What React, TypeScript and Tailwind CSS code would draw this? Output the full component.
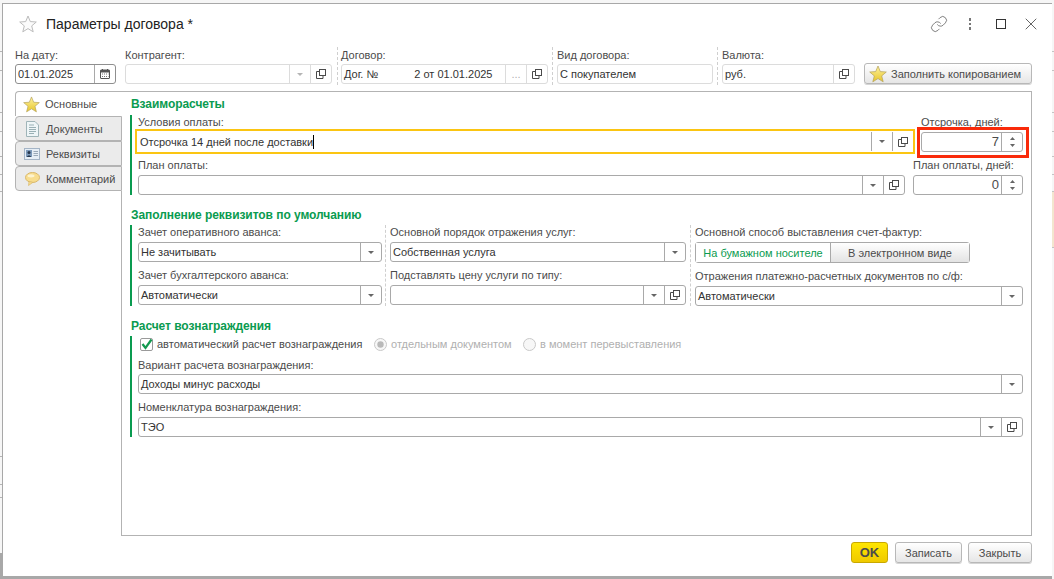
import React from "react";
import { Link, X } from "lucide-react";

const OpenIcon = () => (
  <svg width="10" height="10" viewBox="0 0 10 10" fill="none" stroke="#4a4a4a" strokeWidth="1">
    <rect x="3.5" y="0.5" width="6" height="6" />
    <path d="M3 2.5H0.5V9.5H7V7" />
  </svg>
);

const Caret = ({ light = false }: { light?: boolean }) => (
  <svg width="6" height="3" viewBox="0 0 6 3">
    <path d="M0 0H6L3 3Z" fill={light ? "#b5b5b5" : "#666666"} />
  </svg>
);

const CalendarIcon = () => (
  <svg width="10" height="10" viewBox="0 0 10 10" fill="none">
    <rect x="0.5" y="1" width="9" height="8.5" rx="0.5" stroke="#555555" />
    <rect x="0.5" y="1" width="9" height="2.5" fill="#555555" />
    <path d="M2.5 0V1.5M7.5 0V1.5" stroke="#555555" />
    <path d="M2 5H8.5M2 7.5H8.5" stroke="#777777" strokeDasharray="1 1" />
  </svg>
);

const Star = ({ size = 18 }: { size?: number }) => (
  <svg width={size} height={size} viewBox="0 0 18 18">
    <defs>
      <linearGradient id="starFill" x1="0" y1="0" x2="0" y2="1">
        <stop offset="0" stopColor="#fff3a0" />
        <stop offset="1" stopColor="#e6c52a" />
      </linearGradient>
    </defs>
    <path
      d="M9 1L11.3 6.6L17.3 7L12.7 10.9L14.2 16.8L9 13.6L3.8 16.8L5.3 10.9L0.7 7L6.7 6.6Z"
      fill="url(#starFill)"
      stroke="#b3a15a"
      strokeWidth="0.7"
    />
  </svg>
);

const EmptyStar = () => (
  <svg width="18" height="18" viewBox="0 0 18 18">
    <path
      d="M9 1L11.3 6.6L17.3 7L12.7 10.9L14.2 16.8L9 13.6L3.8 16.8L5.3 10.9L0.7 7L6.7 6.6Z"
      fill="#fbfbfb"
      stroke="#bcbcbc"
      strokeWidth="1"
    />
  </svg>
);

const DocIcon = () => (
  <svg width="13" height="16" viewBox="0 0 13 16" fill="none">
    <path d="M0.5 0.5H9L12.5 4V15.5H0.5Z" fill="#eef5f7" stroke="#9fb4b8" />
    <path d="M3 4H8M3 6.5H10M3 8.5H10M3 10.5H10M3 12.5H8" stroke="#9ab0b5" />
  </svg>
);

const CardIcon = () => (
  <svg width="16" height="12" viewBox="0 0 16 12" fill="none">
    <rect x="0.5" y="0.5" width="15" height="11" fill="#e6eef6" stroke="#a4b4c6" />
    <rect x="2" y="2" width="6" height="7" fill="#7d9abb" />
    <circle cx="5" cy="4.5" r="1.5" fill="#26374d" />
    <path d="M3 9C3 7 7 7 7 9Z" fill="#26374d" />
    <path d="M9.5 3.5H14M9.5 5.5H14M9.5 7.5H14" stroke="#9aa9b8" />
  </svg>
);

const BubbleIcon = () => (
  <svg width="15" height="14" viewBox="0 0 15 14">
    <ellipse cx="7.5" cy="5.5" rx="7" ry="5" fill="#f8dd8e" stroke="#d9b76a" />
    <path d="M4 9.5L3.5 13.5L8 10.3Z" fill="#f8dd8e" stroke="#d9b76a" strokeWidth="0.7" />
    <ellipse cx="6" cy="3.8" rx="3.5" ry="1.6" fill="#fdf3cf" />
  </svg>
);

const CheckIcon = () => (
  <svg width="13" height="13" viewBox="0 0 13 13" fill="none">
    <rect x="0.5" y="0.5" width="12" height="12" rx="1.5" fill="#ffffff" stroke="#9a9a9a" />
    <path d="M2.5 6L5.5 10L11.5 1.5" stroke="#139a50" strokeWidth="2.2" />
  </svg>
);

const RadioIcon = ({ on = false }: { on?: boolean }) => (
  <svg width="13" height="13" viewBox="0 0 13 13" fill="none">
    <circle cx="6.5" cy="6.5" r="6" fill="#f7f7f7" stroke="#c8c8c8" />
    {on && <circle cx="6.5" cy="6.5" r="3.2" fill="#b9b9b9" />}
  </svg>
);

const FieldButton = ({ children, light = false }: { children: React.ReactNode; light?: boolean }) => (
  <div
    className={`flex h-full w-[21px] shrink-0 items-center justify-center border-l ${
      light ? "border-[#dcdcdc]" : "border-[#a9a9a9]"
    }`}
  >
    {children}
  </div>
);

type FieldProps = {
  text?: string;
  value?: React.ReactNode;
  list?: boolean;
  open?: boolean;
  light?: boolean;
  dots?: boolean;
  className?: string;
};

const Field = ({ text, value, list, open, light, dots, className = "" }: FieldProps) => (
  <div
    className={`flex h-[20px] items-center rounded-[3px] border bg-white text-[#333333] ${
      light ? "border-[#dcdcdc]" : "border-[#a9a9a9]"
    } ${className}`}
  >
    <div className="flex-1 truncate pl-[2px]">{value ?? text}</div>
    {list && (
      <FieldButton light={light}>
        <Caret light={light} />
      </FieldButton>
    )}
    {dots && (
      <FieldButton light={light}>
        <span className="text-[#b0b0b0]">...</span>
      </FieldButton>
    )}
    {open && (
      <FieldButton light={light}>
        <OpenIcon />
      </FieldButton>
    )}
  </div>
);

const Spinner = () => (
  <div className="flex h-full w-[21px] shrink-0 flex-col items-center justify-center gap-[4px] border-l border-[#a9a9a9]">
    <svg width="5" height="3" viewBox="0 0 5 3">
      <path d="M0 3H5L2.5 0Z" fill="#666666" />
    </svg>
    <svg width="5" height="3" viewBox="0 0 5 3">
      <path d="M0 0H5L2.5 3Z" fill="#666666" />
    </svg>
  </div>
);

const NumberField = ({ value }: { value: string }) => (
  <div className="flex h-[20px] items-center rounded-[3px] border border-[#a9a9a9] bg-white text-[13px] text-[#4b4b4b]">
    <div className="flex-1 pr-[2px] text-right">{value}</div>
    <Spinner />
  </div>
);

const Label = ({ children, className = "" }: { children: React.ReactNode; className?: string }) => (
  <div className={`flex items-center whitespace-nowrap text-[#4b4b4b] ${className}`}>{children}</div>
);

const Heading = ({ children, first = false }: { children: React.ReactNode; first?: boolean }) => (
  <div
    className={`flex items-center pl-[9px] text-[12px] font-bold tracking-[-0.06px] text-[#0a9b50] ${
      first ? "h-[23px] pt-[1px]" : "h-[30px] pt-[10px]"
    }`}
  >
    {children}
  </div>
);

const Group = ({ children, className = "" }: { children: React.ReactNode; className?: string }) => (
  <div className={`ml-[8px] border-l-2 border-[#0a9b50] pl-[6px] ${className}`}>{children}</div>
);

const Sep = () => <div className="h-full w-0 border-l border-dashed border-[#cfcfcf]" />;

const tabs = [
  { name: "Документы", icon: <DocIcon /> },
  { name: "Реквизиты", icon: <CardIcon /> },
  { name: "Комментарий", icon: <BubbleIcon /> },
];

const Button = ({ children, className = "" }: { children: React.ReactNode; className?: string }) => (
  <div
    className={`flex h-[21px] items-center justify-center rounded-[3px] border border-[#b8b8b8] bg-linear-to-b from-white to-[#e6e6e6] text-[#4b4b4b] shadow-[0_1px_0_#d5d5d5] ${className}`}
  >
    {children}
  </div>
);

const leftLines = [49, 19, 42, 19, 25, 18, 17, 265, 28, 13];
const rightLines = [49, 19, 42, 19, 25, 18, 17, 56];

export default function App() {
  return (
    <div
      className="flex h-[579px] w-[1054px] overflow-hidden bg-[#f6f6f6] text-[11px] leading-[14px]"
      style={{ fontFamily: '"Liberation Sans", Arial, sans-serif' }}
    >
      <div className="flex h-full w-[2px] shrink-0 flex-col pt-[3px]">
        {leftLines.map((h, i) => (
          <div key={i} className="border-b border-[#b5b5b5]" style={{ height: h }} />
        ))}
        <div className="mt-auto h-[26px] bg-[#a8a8a8]" />
      </div>

      <div className="mt-[3px] flex h-[576px] w-[1050px] shrink-0 flex-col border-t border-b-[3px] border-l border-[#a8a8a8] bg-white pr-[20px] pl-[12px]">
        {/* заголовок */}
        <div className="mb-[3px] flex h-[40px] items-center">
          <div className="ml-[4px]">
            <EmptyStar />
          </div>
          <div className="ml-[9px] text-[14px] text-[#222222]">Параметры договора *</div>
          <div className="ml-auto flex translate-x-[9px] items-center">
            <Link size={18} strokeWidth={1.1} className="text-[#666666]" />
            <div className="ml-[21px] flex flex-col gap-[2px]">
              <span className="h-[2.5px] w-[2.5px] bg-[#777777]" />
              <span className="h-[2.5px] w-[2.5px] bg-[#777777]" />
              <span className="h-[2.5px] w-[2.5px] bg-[#777777]" />
            </div>
            <div className="ml-[25px] h-[10px] w-[10px] border border-[#333333]" />
            <X size={20} strokeWidth={1} className="ml-[15px] text-[#444444]" />
          </div>
        </div>

        {/* шапка */}
        <div className="mb-[6px] flex h-[38px]">
          <div className="w-[101px]">
            <Label className="h-[17px] pb-[2px]">На дату:</Label>
            <div className="flex h-[20px] items-center rounded-[3px] border border-[#8f8f8f] bg-white text-[#333333]">
              <div className="flex-1 pl-[2px]">01.01.2025</div>
              <FieldButton>
                <CalendarIcon />
              </FieldButton>
            </div>
          </div>
          <div className="ml-[9px] w-[207px]">
            <Label className="h-[17px] pb-[2px]">Контрагент:</Label>
            <Field list open light />
          </div>
          <div className="mr-[3px] ml-[5px]">
            <Sep />
          </div>
          <div className="w-[207px]">
            <Label className="h-[17px] pb-[2px]">Договор:</Label>
            <Field
              light
              open
              dots
              value={
                <div className="flex">
                  <span>Дог. №</span>
                  <span className="ml-[36px]">2 от 01.01.2025</span>
                </div>
              }
            />
          </div>
          <div className="mr-[4px] ml-[4px]">
            <Sep />
          </div>
          <div className="w-[156px]">
            <Label className="h-[17px] pb-[2px]">Вид договора:</Label>
            <Field light text="С покупателем" />
          </div>
          <div className="mr-[4px] ml-[4px]">
            <Sep />
          </div>
          <div className="w-[133px]">
            <Label className="h-[17px] pb-[2px]">Валюта:</Label>
            <Field light open text="руб." />
          </div>
          <Button className="mt-[16px] ml-[9px] w-[168px] justify-start gap-[4px] pl-[4px]">
            <Star size={18} />
            Заполнить копированием
          </Button>
        </div>

        {/* вкладки и панель */}
        <div className="flex h-[445px]">
          <div className="flex w-[107px] shrink-0 flex-col">
            <div className="flex h-[25px] items-center gap-[5px] rounded-tl-[4px] border-t border-l border-[#b3b3b3] bg-white pl-[7px] text-[#4b4b4b]">
              <Star size={17} />
              Основные
            </div>
            {tabs.map((t) => (
              <div
                key={t.name}
                className="flex h-[25px] items-center rounded-l-[4px] border border-[#b3b3b3] bg-[#ebebeb] text-[#4b4b4b]"
              >
                <div className="flex w-[30px] justify-center pl-[2px]">{t.icon}</div>
                {t.name}
              </div>
            ))}
            <div className="flex-1 border-r border-[#b3b3b3]" />
          </div>

          <div className="flex-1 border-t border-r border-b border-[#b3b3b3]">
            <Heading first>Взаиморасчеты</Heading>
            <Group className="h-[80px]">
              <div className="flex h-[39px]">
                <div className="w-[780px] -translate-x-[3px]">
                  <Label className="h-[14px] pl-[3px]">Условия оплаты:</Label>
                  <div className="flex h-[25px] items-center border-2 border-[#fbc512] bg-white text-[#333333]">
                    <div className="flex flex-1 items-center pl-[3px]">
                      Отсрочка 14 дней после доставки
                      <span className="h-[14px] w-px bg-black" />
                    </div>
                    <div className="flex h-[19px] w-[21px] items-center justify-center border-l border-[#a9a9a9]">
                      <Caret />
                    </div>
                    <div className="flex h-[19px] w-[21px] items-center justify-center border-l border-[#a9a9a9]">
                      <OpenIcon />
                    </div>
                  </div>
                </div>
                <div className="ml-[3px] w-[102px]">
                  <Label className="h-[14px]">Отсрочка, дней:</Label>
                  <div className="relative mt-[3px]">
                    <NumberField value="7" />
                    <div className="absolute -top-[5px] -right-[6px] -bottom-[6px] -left-[4px] border-[3px] border-[#f92a0a]" />
                  </div>
                </div>
              </div>
              <div className="flex">
                <div className="w-[767px]">
                  <Label className="h-[21px]">План оплаты:</Label>
                  <Field list open />
                </div>
                <div className="ml-[8px] w-[110px]">
                  <Label className="h-[21px]">План оплаты, дней:</Label>
                  <NumberField value="0" />
                </div>
              </div>
            </Group>

            <Heading>Заполнение реквизитов по умолчанию</Heading>
            <Group className="flex h-[81px]">
              <div className="w-[244px]">
                <Label className="h-[17px] pb-[3px]">Зачет оперативного аванса:</Label>
                <Field text="Не зачитывать" list />
                <Label className="h-[23px] pt-[3px]">Зачет бухгалтерского аванса:</Label>
                <Field text="Автоматически" list />
              </div>
              <div className="mr-[4px] ml-[3px]">
                <Sep />
              </div>
              <div className="w-[296px]">
                <Label className="h-[17px] pb-[3px]">Основной порядок отражения услуг:</Label>
                <Field text="Собственная услуга" list />
                <Label className="h-[23px] pt-[3px]">Подставлять цену услуги по типу:</Label>
                <Field list open />
              </div>
              <div className="mr-[4px] ml-[4px]">
                <Sep />
              </div>
              <div className="w-[328px]">
                <Label className="h-[17px] pb-[3px]">Основной способ выставления счет-фактур:</Label>
                <div className="flex h-[21px] w-[275px] rounded-[3px] border border-[#a9a9a9]">
                  <div className="flex w-[135px] items-center justify-center border-r border-[#a9a9a9] bg-white text-[#0a9b50]">
                    На бумажном носителе
                  </div>
                  <div className="flex flex-1 items-center justify-center bg-linear-to-b from-white to-[#e3e3e3] text-[#4b4b4b]">
                    В электронном виде
                  </div>
                </div>
                <Label className="h-[23px] pt-[3px]">Отражения платежно-расчетных документов по с/ф:</Label>
                <Field text="Автоматически" list />
              </div>
            </Group>

            <Heading>Расчет вознаграждения</Heading>
            <Group className="h-[101px]">
              <div className="flex h-[16px] items-center whitespace-nowrap">
                <div className="ml-[2px]">
                  <CheckIcon />
                </div>
                <span className="ml-[4px] w-[208px] text-[#4b4b4b]">автоматический расчет вознаграждения</span>
                <div className="ml-[9px]">
                  <RadioIcon on />
                </div>
                <span className="ml-[4px] w-[123px] text-[#b0b0b0]">отдельным документом</span>
                <div className="ml-[9px]">
                  <RadioIcon />
                </div>
                <span className="ml-[4px] text-[#b0b0b0]">в момент перевыставления</span>
              </div>
              <Label className="h-[22px] pt-[3px]">Вариант расчета вознаграждения:</Label>
              <Field text="Доходы минус расходы" list className="w-[885px]" />
              <Label className="h-[23px] pt-[3px]">Номенклатура вознаграждения:</Label>
              <Field text="ТЭО" list open className="w-[885px]" />
            </Group>
          </div>
        </div>

        {/* кнопки */}
        <div className="mt-[6px] flex justify-end">
          <div className="flex h-[21px] w-[37px] items-center justify-center rounded-[3px] border border-[#c9a800] bg-linear-to-b from-[#ffe600] to-[#efc900] text-[13px] font-bold text-[#4b4b4b]">
            OK
          </div>
          <Button className="ml-[7px] w-[67px]">Записать</Button>
          <Button className="ml-[6px] w-[64px]">Закрыть</Button>
        </div>
      </div>

      <div className="flex h-full w-[2px] shrink-0 flex-col pt-[3px]">
        {rightLines.map((h, i) => (
          <div
            key={i}
            className={`border-b border-[#c4c4c4] ${i === 7 ? "bg-[#f3e6cf]" : ""}`}
            style={{ height: h }}
          />
        ))}
      </div>
    </div>
  );
}
